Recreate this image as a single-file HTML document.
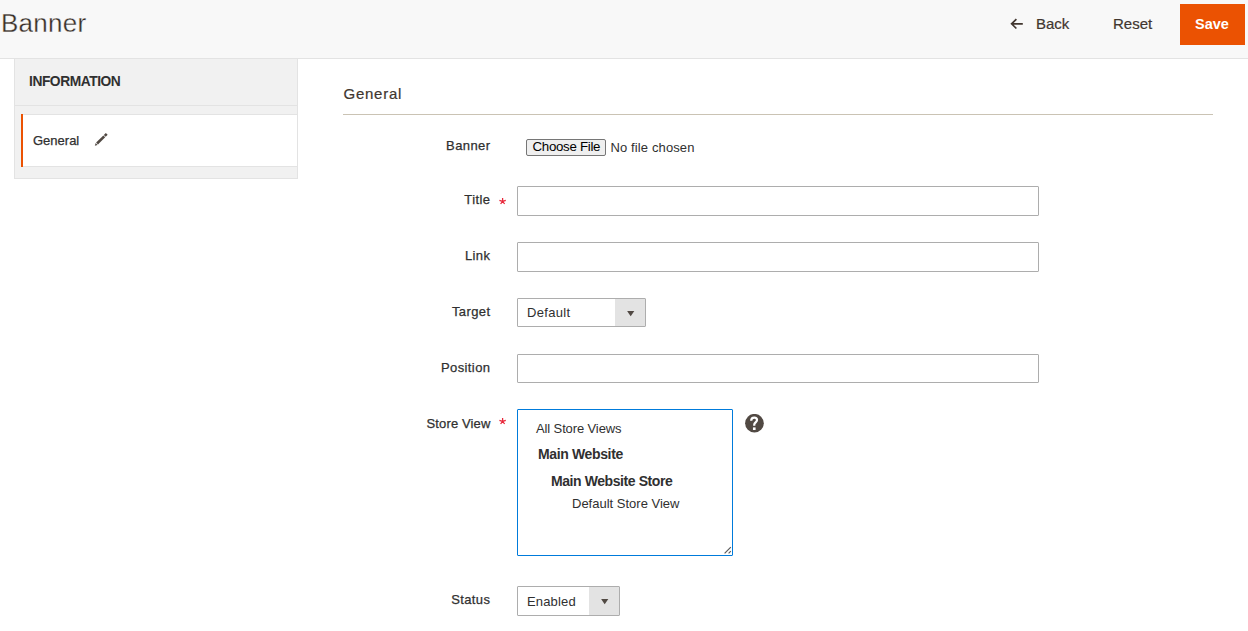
<!DOCTYPE html>
<html><head><meta charset="utf-8">
<style>
*{box-sizing:border-box;margin:0;padding:0}
html,body{width:1248px;height:631px;overflow:hidden;background:#fff;font-family:"Liberation Sans",sans-serif;color:#303030}
.abs{position:absolute}
.t{position:absolute;white-space:nowrap;line-height:1}
#hdr{position:absolute;left:0;top:0;width:1248px;height:59px;background:#f8f8f8;border-bottom:1px solid #e3e3e3}
#title{left:1px;top:10px;font-size:26px;letter-spacing:0.25px;color:#3a3029;-webkit-text-stroke:0.3px #f8f8f8}
.act{font-size:15px;color:#41362f;-webkit-text-stroke:0.2px #41362f}
#save{left:1180px;top:4px;width:65px;height:41px;background:#eb5202}
#savet{color:#fff;font-size:14.5px;font-weight:bold}
#side{left:14px;top:59px;width:284px;height:120px;background:#f1f1f1;border:1px solid #e3e3e3;border-top:0}
#sideline{left:15px;top:105px;width:282px;height:1px;background:#e3e3e3}
#item{left:21px;top:114px;width:277px;height:53px;background:#fff;border-top:1px solid #e3e3e3;border-bottom:1px solid #e3e3e3;border-right:1px solid #e3e3e3}
#itembar{left:21px;top:114px;width:2px;height:53px;background:#eb5202}
.lbl{font-size:13px;letter-spacing:0.4px;color:#303030;-webkit-text-stroke:0.25px #303030}
.inp{position:absolute;left:517px;width:522px;height:30px;border:1px solid #adadad;border-radius:1px;background:#fff}
.sel{position:absolute;left:517px;border:1px solid #adadad;border-radius:1px;background:#fff}
.sel .g{position:absolute;right:0;top:0;bottom:0;width:30px;background:#e3e3e3}
.req{color:#e22626;font-size:13px}
</style></head><body>
<div id="hdr"></div>
<div class="t" id="title">Banner</div>
<svg class="abs" style="left:1006px;top:14px" width="20" height="20" viewBox="0 0 20 20"><path d="M10.4 5.1 L5.6 9.8 L10.4 14.5 M5.6 9.8 H16.8" stroke="#41362f" stroke-width="1.7" fill="none"/></svg>
<div class="t act" style="left:1036px;top:16.3px">Back</div>
<div class="t act" style="left:1113px;top:16.3px">Reset</div>
<div class="abs" id="save"></div>
<div class="t" id="savet" style="left:1195px;top:17px">Save</div>

<div class="abs" id="side"></div>
<div class="abs" id="sideline"></div>
<div class="t" style="left:29px;top:75px;font-size:13.8px;letter-spacing:-0.45px;font-weight:bold;color:#303030">INFORMATION</div>
<div class="abs" id="item"></div>
<div class="abs" id="itembar"></div>
<div class="t lbl" style="left:33px;top:134px;letter-spacing:0">General</div>
<svg class="abs" style="left:88px;top:127px" width="24" height="24" viewBox="0 0 24 24"><g transform="translate(6.8,18.8) rotate(-45)" fill="#514943"><path d="M0 0 L2.6 -1.3 L2.6 1.3 Z"/><rect x="3.2" y="-1.3" width="10.2" height="2.6"/><rect x="14.1" y="-1.3" width="2.8" height="2.6"/></g></svg>

<div class="t" style="left:343.6px;top:86px;font-size:15px;letter-spacing:0.72px;color:#41362f;-webkit-text-stroke:0.2px #41362f">General</div>
<div class="abs" style="left:343px;top:114px;width:870px;height:1px;background:#cac3b4"></div>

<div class="t lbl" style="right:757.6px;top:139px">Banner</div>
<div class="abs" style="left:526px;top:139px;width:80px;height:17px;border:1px solid #767676;border-radius:2px;background:#efefef"></div>
<div class="t" style="left:532.5px;top:139.5px;font-size:13.3px;letter-spacing:-0.3px;color:#000">Choose File</div>
<div class="t" style="left:610.5px;top:140.5px;font-size:13px;letter-spacing:0.12px;color:#303030">No file chosen</div>

<div class="t lbl" style="right:757.6px;top:193px">Title</div>
<svg class="abs" style="left:499px;top:198px" width="8" height="7" viewBox="0 0 8 7"><path d="M3.6 3.3 L3.6 0 M3.6 3.3 L6.8 2.3 M3.6 3.3 L5.6 6 M3.6 3.3 L1.6 6 M3.6 3.3 L0.4 2.3" stroke="#e8283a" stroke-width="1.25" fill="none"/></svg>
<div class="inp" style="top:186px"></div>

<div class="t lbl" style="right:757.6px;top:249px">Link</div>
<div class="inp" style="top:242px"></div>

<div class="t lbl" style="right:757.6px;top:305px">Target</div>
<div class="sel" style="top:298px;width:129px;height:29px"><div class="g"></div></div>
<div class="t" style="left:527px;top:306px;font-size:13px;letter-spacing:0.3px;color:#303030">Default</div>
<svg class="abs" style="left:627px;top:311px" width="8" height="6" viewBox="0 0 8 6"><path d="M0.1 0 H7.3 L3.7 5.2 Z" fill="#514943"/></svg>

<div class="t lbl" style="right:757.6px;top:361px">Position</div>
<div class="inp" style="top:354px;height:29px"></div>

<div class="t lbl" style="right:757.6px;top:417px;letter-spacing:0.12px">Store View</div>
<svg class="abs" style="left:499px;top:418px" width="8" height="7" viewBox="0 0 8 7"><path d="M3.6 3.3 L3.6 0 M3.6 3.3 L6.8 2.3 M3.6 3.3 L5.6 6 M3.6 3.3 L1.6 6 M3.6 3.3 L0.4 2.3" stroke="#e8283a" stroke-width="1.25" fill="none"/></svg>
<div class="abs" style="left:517px;top:409px;width:216px;height:147px;border:1px solid #007bdb;border-radius:1px;background:#fff"></div>
<div class="t" style="left:536px;top:422px;font-size:13px;letter-spacing:-0.12px;color:#303030">All Store Views</div>
<div class="t" style="left:538px;top:447px;font-size:14px;letter-spacing:-0.36px;font-weight:bold;color:#303030">Main Website</div>
<div class="t" style="left:551px;top:474px;font-size:14px;letter-spacing:-0.42px;font-weight:bold;color:#303030">Main Website Store</div>
<div class="t" style="left:572px;top:497px;font-size:13px;color:#303030">Default Store View</div>
<svg class="abs" style="left:722px;top:544px" width="10" height="10" viewBox="0 0 10 10"><path d="M2.6 9.4 L8.8 3.2 M6.6 9.4 L8.8 7.2" stroke="#5a5a5a" stroke-width="1.2" fill="none"/></svg>
<svg class="abs" style="left:745px;top:414px" width="20" height="20" viewBox="0 0 20 20"><circle cx="9.45" cy="9.25" r="9.35" fill="#514943"/><path d="M6.2 6.8 C6.2 4.6 7.6 3.5 9.3 3.5 C11 3.5 12 4.6 12 6.1 C12 8.3 9.25 8.6 9.25 10.8 V11.7" stroke="#fff" stroke-width="2.25" fill="none"/><rect x="7.95" y="13.4" width="2.65" height="2.6" fill="#fff"/></svg>

<div class="t lbl" style="right:757.6px;top:593px">Status</div>
<div class="sel" style="top:586px;width:103px;height:30px"><div class="g"></div></div>
<div class="t" style="left:527px;top:595px;font-size:13px;letter-spacing:0.15px;color:#303030">Enabled</div>
<svg class="abs" style="left:601px;top:599px" width="8" height="6" viewBox="0 0 8 6"><path d="M0.1 0 H7.3 L3.7 5.2 Z" fill="#514943"/></svg>
</body></html>
